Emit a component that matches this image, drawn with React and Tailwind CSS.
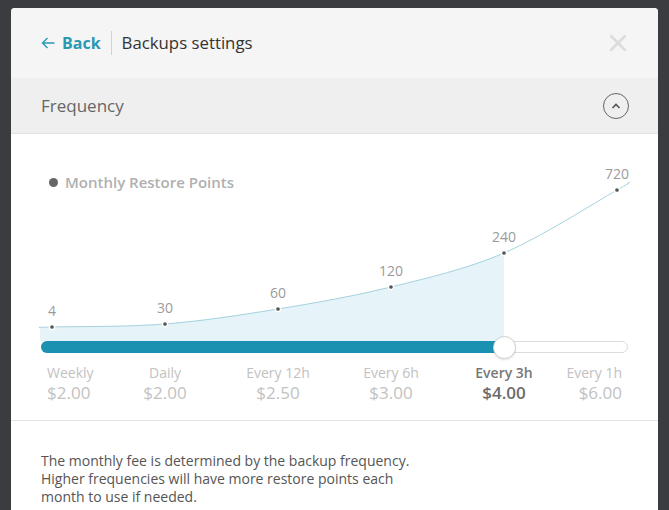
const options = [
  { name: 'Weekly', price: '$2.00', points: '4' },
  { name: 'Daily', price: '$2.00', points: '30' },
  { name: 'Every 12h', price: '$2.50', points: '60' },
  { name: 'Every 6h', price: '$3.00', points: '120' },
  { name: 'Every 3h', price: '$4.00', points: '240' },
  { name: 'Every 1h', price: '$6.00', points: '720' },
];
const selected = 4;

// curve coords inside the chart svg (587 x 207)
const pts = [[-1, 193.5], [11, 193], [124, 190], [237, 175], [350, 153], [463, 119], [576, 56], [587, 49]];

function seg(i) {
  const a = pts[Math.max(i - 1, 0)];
  const b = pts[i];
  const c = pts[i + 1];
  const d = pts[Math.min(i + 2, pts.length - 1)];
  const c1 = [b[0] + (c[0] - a[0]) / 6, b[1] + (c[1] - a[1]) / 6];
  const c2 = [c[0] - (d[0] - b[0]) / 6, c[1] - (d[1] - b[1]) / 6];
  return ` C ${c1[0]} ${c1[1]} ${c2[0]} ${c2[1]} ${c[0]} ${c[1]}`;
}

let linePath = `M ${pts[0][0]} ${pts[0][1]}`;
for (let i = 0; i < pts.length - 1; i++) linePath += seg(i);

const selX = pts[selected + 1][0];
let fillPath = `M -1 207 L ${pts[0][0]} ${pts[0][1]}`;
for (let i = 0; i <= selected; i++) fillPath += seg(i);
fillPath += ` L ${selX} 207 Z`;

function Chart() {
  return (
    <div className="relative h-[207px]">
      <svg width="587" height="207" viewBox="0 0 587 207" className="block overflow-visible">
        <path d={fillPath} fill="#e6f3f8" />
        <path d={linePath} fill="none" stroke="#a3d2de" strokeWidth="1" />
        {options.map((o, i) => {
          const [x, y] = pts[i + 1];
          return (
            <g key={o.name}>
              <circle cx={x} cy={y} r="2.6" fill="#555" stroke="#fff" strokeWidth="1.5" />
              <text x={x} y={y - 11} textAnchor="middle" fontSize="14" fill="#9b9b9b" fontFamily="'Open Sans', sans-serif">
                {o.points}
              </text>
            </g>
          );
        })}
      </svg>
      <div className="absolute left-[8px] top-[38px] flex items-center gap-[7px]">
        <span className="w-[9px] h-[9px] rounded-full bg-[#666]" />
        <span className="text-[15px] leading-[20px] font-semibold text-[#b0b0b0]">Monthly Restore Points</span>
      </div>
    </div>
  );
}

function Slider() {
  return (
    <div className="relative h-[12px] rounded-full border border-[#dcdcdc] bg-white">
      <div className="absolute -left-px -top-px h-[12px] w-[464px] rounded-full bg-[#1a91b1]" />
      <div className="absolute left-[451px] -top-[6px] w-[23px] h-[23px] rounded-full bg-white border border-[#d0d0d0] shadow-[0_1px_2px_rgba(0,0,0,0.12)]" />
    </div>
  );
}

function Label({ o, active, className }) {
  return (
    <div className={className}>
      <div className={`text-[14px] leading-[20px] ${active ? 'font-semibold text-[#777]' : 'text-[#c2c2c2]'}`}>{o.name}</div>
      <div className={`text-[17px] leading-[20px] ${active ? 'font-semibold text-[#6b6b6b]' : 'text-[#c2c2c2]'}`}>{o.price}</div>
    </div>
  );
}

export default function App() {
  return (
    <div className="h-[510px] w-full overflow-hidden bg-[#3b3c40] pt-[8px] pl-[11px] font-['Open_Sans',sans-serif]">
      <div className="w-[647px] rounded-t-[4px] overflow-hidden bg-white">
        <div className="h-[70px] bg-[#f5f5f5] flex items-center px-[30px]">
          <div className="flex items-center gap-[7px] text-[#2a98b1]">
            <svg width="14" height="12" viewBox="0 0 14 12" fill="none" stroke="currentColor" strokeWidth="1.4">
              <path d="M13.5 6H1.5M6.5 1L1.5 6l5 5" />
            </svg>
            <span className="text-[16px] font-bold">Back</span>
          </div>
          <div className="mx-[10px] w-px h-[24px] bg-[#d2d2d2]" />
          <span className="text-[16.8px] text-[#333]">Backups settings</span>
          <svg className="ml-auto mr-[1px]" width="18" height="18" viewBox="0 0 18 18" stroke="#dcdcdc" strokeWidth="2.6">
            <path d="M1.5 1.5l15 15M16.5 1.5l-15 15" />
          </svg>
        </div>
        <div className="h-[56px] bg-[#efefef] border-b border-[#e2e2e2] flex items-center px-[30px]">
          <span className="text-[17px] text-[#666]">Frequency</span>
          <div className="ml-auto mr-[-1px] w-[26px] h-[26px] rounded-full border border-[#666] flex items-center justify-center">
            <svg width="10" height="6" viewBox="0 0 10 6" fill="none" stroke="#555" strokeWidth="1.6">
              <path d="M1.5 5L5 1.5 8.5 5" />
            </svg>
          </div>
        </div>
        <div className="px-[30px] pb-[17px]">
          <Chart />
          <Slider />
          <div className="mt-[10px] flex">
            <Label o={options[0]} active={selected === 0} className="w-[67.5px] pl-[6px] text-left" />
            {options.slice(1, 5).map((o, i) => (
              <Label key={o.name} o={o} active={selected === i + 1} className="w-[113px] text-center" />
            ))}
            <Label o={options[5]} active={selected === 5} className="flex-1 pr-[6px] text-right" />
          </div>
        </div>
        <div className="border-t border-[#e4e4e4] px-[30px] pt-[31px] pb-[20px] text-[14px] leading-[18px] text-[#555]">
          The monthly fee is determined by the backup frequency.
          <br />
          Higher frequencies will have more restore points each
          <br />
          month to use if needed.
        </div>
      </div>
    </div>
  );
}
